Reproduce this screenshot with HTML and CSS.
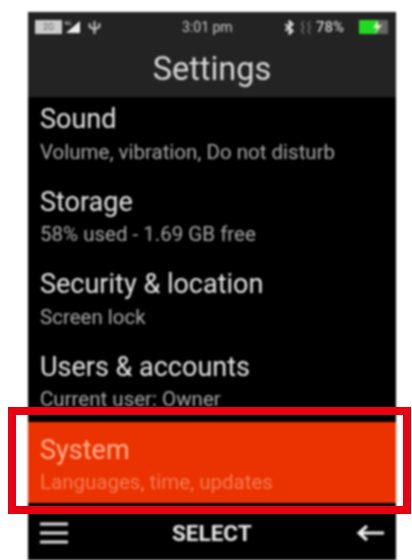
FILE: index.html
```html
<!DOCTYPE html>
<html lang="en">
<head>
<meta charset="utf-8">
<title>Settings</title>
<link rel="stylesheet" href="styles.css">
</head>
<body>
<div class="phone">
  <header class="header">
    <div class="status">
      <div class="status-left">
        <span class="sim">2G</span>
        <svg class="signal" viewBox="0 0 18 14"><path d="M16 1V13H2Z" fill="#eee"/><text x="0" y="5" class="lte">4G</text></svg>
        <svg class="usb" viewBox="0 0 12 14"><path d="M6 1V13M1.500 3V6.500L6 9M10.500 3V6.500L6 9" stroke="#bbb" stroke-width="2" fill="none"/></svg>
      </div>
      <span class="clock">3:01 pm</span>
      <div class="status-right">
        <svg class="bt" viewBox="0 0 10 14"><path d="M1 4L8 10L5 13V1L8 4L1 10" stroke="#ddd" stroke-width="1.800" fill="none"/></svg>
        <svg class="vib" viewBox="0 0 12 14"><path d="M3 1L1 4L3 7L1 10L3 13M9 1L7 4L9 7L7 10L9 13" stroke="#888" stroke-width="1" fill="none"/></svg>
        <span class="pct">78%</span>
        <svg class="battery" viewBox="0 0 32 16"><rect x="0" y="1" width="18" height="14" fill="#22d822"/><rect x="18" y="1" width="11" height="14" fill="#666"/><path d="M19 1L14 9H18L16 15L23 6H19Z" fill="#d8f0c0"/></svg>
      </div>
    </div>
    <h1 class="title">Settings</h1>
  </header>
  <ul class="list">
    <li class="item"><div class="name">Sound</div><div class="sub">Volume, vibration, Do not disturb</div></li>
    <li class="item"><div class="name">Storage</div><div class="sub">58% used - 1.69 GB free</div></li>
    <li class="item"><div class="name">Security &amp; location</div><div class="sub">Screen lock</div></li>
    <li class="item"><div class="name">Users &amp; accounts</div><div class="sub">Current user: Owner</div></li>
    <li class="item active"><div class="name">System</div><div class="sub">Languages, time, updates</div></li>
  </ul>
  <footer class="softkeys">
    <svg class="menu" viewBox="0 0 28 24"><path d="M0 3H28M0 12H28M0 21H28" stroke="#ddd" stroke-width="3"/></svg>
    <span class="select">SELECT</span>
    <svg class="back" viewBox="0 0 28 18"><path d="M28 9H3M11 2L3 9L11 16" stroke="#eee" stroke-width="3" fill="none"/></svg>
  </footer>
</div>
<div class="frame"></div>
</body>
</html>
```
FILE: styles.css
```css
html, body { margin: 0; padding: 0; background: #fff; }
body { width: 412px; height: 560px; overflow: hidden; position: relative; font-family: Roboto, "Liberation Sans", sans-serif; }
.phone { margin: 12px 0 0 28px; width: 368px; height: 548px; background: #000; display: flex; flex-direction: column; filter: blur(0.8px); overflow: hidden; }
.header { background: #232323; height: 85px; flex: none; }
.status { height: 30px; display: flex; align-items: center; justify-content: space-between; padding: 0 5px 0 7px; position: relative; color: #ccc; }
.status-left, .status-right { display: flex; align-items: center; gap: 2px; }
.sim { background: #ccc; color: #666; font-size: 9px; width: 27px; height: 14px; text-align: center; line-height: 14px; }
.signal { width: 18px; height: 14px; }
.lte { font-size: 6px; fill: #ddd; }
.usb { width: 13px; height: 15px; margin-left: 4px; }
.clock { position: absolute; left: 154px; top: 7px; font-size: 14px; color: #ccc; }
.bt { width: 11px; height: 15px; }
.vib { width: 14px; height: 15px; margin-left: 3px; }
.pct { font-size: 15px; font-weight: 500; color: #ccc; margin-right: 13px; }
.battery { width: 32px; height: 16px; }
.title { margin: 0; text-align: center; font-size: 32.500px; font-weight: 400; color: #d8d8d8; line-height: 44px; margin-top: 5px; }
.list { list-style: none; margin: 0; padding: 0; flex: 1; display: flex; flex-direction: column; }
.item { height: 82.500px; padding: 7px 12px 0; box-sizing: border-box; flex: none; }
.name { font-size: 27px; line-height: 30px; color: #e4e4e4; }
.sub { font-size: 20.500px; line-height: 26px; margin-top: 4.500px; color: #a8a8a8; }
.active { height: 81px; margin-top: -5px; background: #ea3300; padding-top: 13px; }
.active .name { color: #ffb090; }
.active .sub { color: #f47a50; margin-top: 4px; }
.softkeys { height: 46px; flex: none; display: flex; align-items: center; justify-content: space-between; padding: 0 12px 4px; position: relative; margin-top: 6px; }
.menu { width: 28px; height: 24px; }
.select { position: absolute; left: 144px; top: 10px; font-size: 22.500px; font-weight: 700; color: #e6e6e6; }
.back { width: 28px; height: 18px; }
.frame { position: absolute; left: 8px; top: 407px; width: 387px; height: 91px; border: 8px solid #e60012; }
```
